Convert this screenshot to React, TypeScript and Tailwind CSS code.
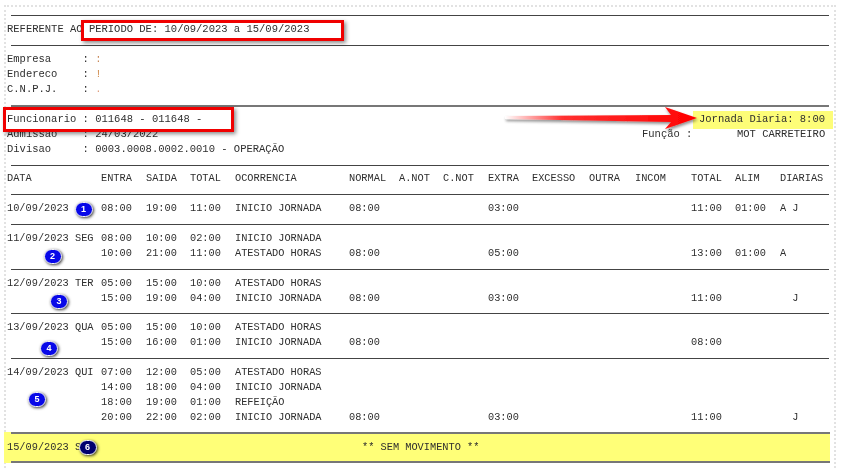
const font = { fontFamily: '"Liberation Mono", "Courier New", monospace' };

const cols = "grid grid-cols-[94px_45px_44px_45px_114px_50px_44px_45px_44px_57px_46px_56px_44px_45px_1fr]";

type Cells = Record<number, string>;

function Row({ c }: { c: string[] }) {
  return (
    <div className={`${cols} h-[15px] leading-[15px] pl-[3px] whitespace-pre`}>
      {c.map((t, i) => (
        <div key={i}>{t}</div>
      ))}
    </div>
  );
}

function cells(m: Cells) {
  return Array.from({ length: 15 }, (_, i) => m[i] ?? "");
}

function Rule({ className = "h-px bg-[#444]" }: { className?: string }) {
  return <div className={`ml-[7px] w-[818px] ${className}`} />;
}

function Badge({ n, x, y, dark }: { n: number; x: number; y: number; dark?: boolean }) {
  return (
    <div
      className={`absolute w-[18px] h-[15px] rounded-full border border-[#f4f4f4] text-white text-[9px] font-bold leading-[13px] text-center shadow-[1px_1px_3px_rgba(0,0,0,0.75)] ${dark ? "bg-[#00006e]" : "bg-[#0808e8]"}`}
      style={{ left: x - 9, top: y - 7.5, fontFamily: '"Liberation Sans", sans-serif' }}
    >
      {n}
    </div>
  );
}

const days: { rows: Cells[]; h: string }[] = [
  { h: "h-[29px]", rows: [{ 0: "10/09/2023", 1: "08:00", 2: "19:00", 3: "11:00", 4: "INICIO JORNADA", 5: "08:00", 8: "03:00", 12: "11:00", 13: "01:00", 14: "A J" }] },
  {
    h: "h-[44px]",
    rows: [
      { 0: "11/09/2023 SEG", 1: "08:00", 2: "10:00", 3: "02:00", 4: "INICIO JORNADA" },
      { 1: "10:00", 2: "21:00", 3: "11:00", 4: "ATESTADO HORAS", 5: "08:00", 8: "05:00", 12: "13:00", 13: "01:00", 14: "A" },
    ],
  },
  {
    h: "h-[43px]",
    rows: [
      { 0: "12/09/2023 TER", 1: "05:00", 2: "15:00", 3: "10:00", 4: "ATESTADO HORAS" },
      { 1: "15:00", 2: "19:00", 3: "04:00", 4: "INICIO JORNADA", 5: "08:00", 8: "03:00", 12: "11:00", 14: "  J" },
    ],
  },
  {
    h: "h-[44px]",
    rows: [
      { 0: "13/09/2023 QUA", 1: "05:00", 2: "15:00", 3: "10:00", 4: "ATESTADO HORAS" },
      { 1: "15:00", 2: "16:00", 3: "01:00", 4: "INICIO JORNADA", 5: "08:00", 12: "08:00" },
    ],
  },
  {
    h: "h-[73px]",
    rows: [
      { 0: "14/09/2023 QUI", 1: "07:00", 2: "12:00", 3: "05:00", 4: "ATESTADO HORAS" },
      { 1: "14:00", 2: "18:00", 3: "04:00", 4: "INICIO JORNADA" },
      { 1: "18:00", 2: "19:00", 3: "01:00", 4: "REFEIÇÃO" },
      { 1: "20:00", 2: "22:00", 3: "02:00", 4: "INICIO JORNADA", 5: "08:00", 8: "03:00", 12: "11:00", 14: "  J" },
    ],
  },
];

const head = ["DATA", "ENTRA", "SAIDA", "TOTAL", "OCORRENCIA", "NORMAL", "A.NOT", "C.NOT", "EXTRA", "EXCESSO", "OUTRA", "INCOM", "TOTAL", "ALIM", "DIARIAS"];

export default function App() {
  return (
    <div className="relative w-[846px] h-[468px] bg-white overflow-hidden text-[10.3px] text-[#2e2e2e] blur-[0.3px]" style={font}>
      <div className="ml-[4px] mt-[5px] w-[832px] h-[463px] border-t-2 border-x-2 border-dotted border-[#e2e2e2]">
        <div className="-ml-[2px] pt-[8px]">
          <Rule />
          <div className="h-[29px] pl-[3px] leading-[27px] whitespace-pre text-[10.5px]">REFERENTE AO PERIODO DE: 10/09/2023 a 15/09/2023</div>
          <Rule />
          <div className="h-[59px] pl-[3px] pt-[6px] leading-[15px] whitespace-pre text-[10.5px]">
            <div>Empresa     : <span className="text-[#c98a5a]">:</span></div>
            <div>Endereco    : <span className="text-[#d08a4a]">!</span></div>
            <div>C.N.P.J.    : <span className="text-[#e0a080]">.</span></div>
          </div>
          <Rule className="h-[2px] bg-[#777]" />
          <div className="h-[58px] pt-[5px] leading-[15px] whitespace-pre text-[10.5px]">
            <div className="flex justify-between h-[15px] pl-[3px]">
              <div>Funcionario : 011648 - 011648 -</div>
              <div className="-mt-px mr-px h-[18px] w-[140px] pl-[6px] leading-[17px] bg-[#fdfd78]">Jornada Diaria: 8:00</div>
            </div>
            <div className="flex pl-[3px]">
              <div className="w-[635px]">Admissao    : 24/03/2022</div>
              <div className="w-[95px]">Função :</div>
              <div>MOT CARRETEIRO</div>
            </div>
            <div className="pl-[3px]">Divisao     : 0003.0008.0002.0010 - OPERAÇÃO</div>
          </div>
          <Rule />
          <div className="h-[28px] pt-[5px]">
            <Row c={head} />
          </div>
          <Rule />
          {days.map((d, i) => (
            <div key={i}>
              <div className={`${d.h} pt-[6px]`}>
                {d.rows.map((r, j) => (
                  <Row key={j} c={cells(r)} />
                ))}
              </div>
              {i < days.length - 1 && <Rule />}
            </div>
          ))}
          <div className="w-[826px] h-[31px] bg-[#ffff78] relative">
            <div className="ml-[7px] w-[819px] h-[2px] bg-[#777] absolute top-0 left-0" />
            <div className="ml-[7px] w-[819px] h-[2px] bg-[#777] absolute bottom-0 left-0" />
            <div className="flex h-full items-center pl-[3px] whitespace-pre">
              <div className="w-[355px]">15/09/2023 SEX</div>
              <div>** SEM MOVIMENTO **</div>
            </div>
          </div>
        </div>
      </div>

      <div className="absolute left-[81px] top-[20px] w-[263px] h-[21px] border-[3px] border-[#f00000] shadow-[2px_2px_4px_rgba(0,0,0,0.45)]" />
      <div className="absolute left-[3px] top-[107px] w-[231px] h-[25px] border-[3px] border-[#f00000] shadow-[2px_2px_4px_rgba(0,0,0,0.45)]" />

      <svg className="absolute left-[500px] top-[103px]" width="205" height="32" viewBox="0 0 205 32">
        <defs>
          <linearGradient id="tail" x1="0" x2="1" y1="0" y2="0">
            <stop offset="0" stopColor="#ffffff" />
            <stop offset="0.3" stopColor="#ff3030" />
            <stop offset="1" stopColor="#ff0000" />
          </linearGradient>
          <filter id="sh" x="-5%" y="-30%" width="110%" height="170%">
            <feDropShadow dx="1" dy="2" stdDeviation="1.5" floodColor="#000" floodOpacity="0.45" />
          </filter>
        </defs>
        <path d="M5 13 L171 12 L165 4 L197 15 L165 26 L171 19 L5 16 Z" fill="url(#tail)" filter="url(#sh)" />
      </svg>

      <Badge n={1} x={83.5} y={209} />
      <Badge n={2} x={52.5} y={256} />
      <Badge n={3} x={59} y={301} />
      <Badge n={4} x={49} y={348} />
      <Badge n={5} x={37} y={399} />
      <Badge n={6} x={87.5} y={447} dark />
    </div>
  );
}
